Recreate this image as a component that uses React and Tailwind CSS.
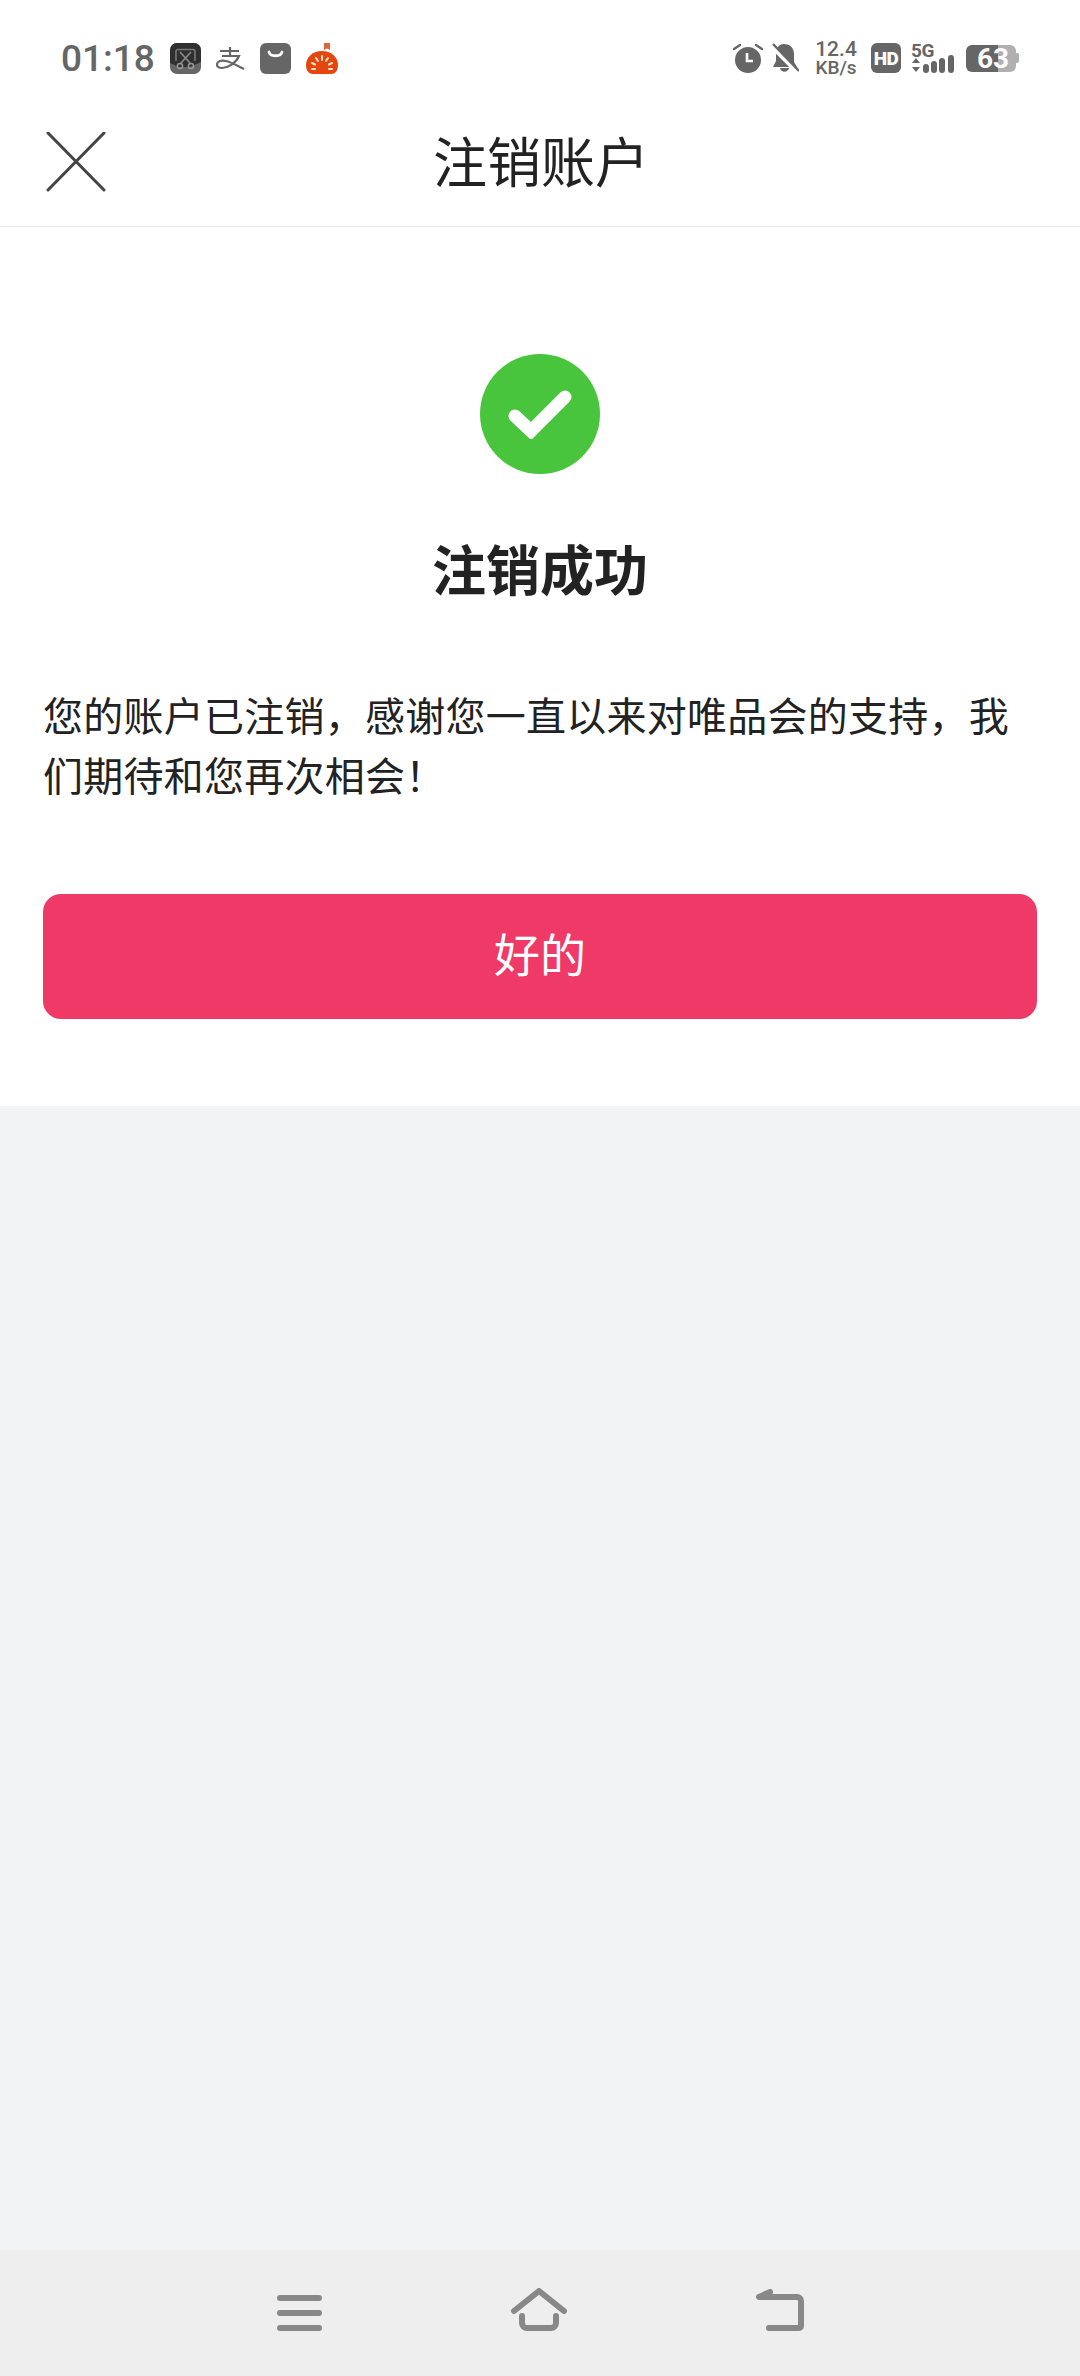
const FONT = "font-['Roboto','Noto_Sans_CJK_SC',sans-serif]";

const ScissorsApp = () => (
  <svg width="31" height="31" viewBox="0 0 31 31">
    <rect width="31" height="31" rx="7" fill="#666" />
    <path d="M0 7a7 7 0 0 1 7-7h17a7 7 0 0 1 7 7v12L20 24H9L0 20z" fill="#2f2f2f" />
    <path d="M6 18V8.500a2 2 0 0 1 2-2h15a2 2 0 0 1 2 2V18" fill="none" stroke="#777" strokeWidth="1.600" />
    <path d="M10 9l10 11M21 9L11 20" stroke="#888" strokeWidth="1.800" />
    <circle cx="10" cy="23" r="2.600" fill="none" stroke="#999" strokeWidth="1.500" />
    <circle cx="21" cy="23" r="2.600" fill="none" stroke="#999" strokeWidth="1.500" />
  </svg>
);

const AlipayIcon = () => (
  <svg width="29" height="24" viewBox="0 0 29 24" fill="none" stroke="#666" strokeWidth="2.200">
    <path d="M4 5h19M14 1v8M6 10h17C20 17 12 22 6 22c-3 0-5-1-5-3.500C1 15 6 14 10 15c6 1.500 12 5 18 8" />
  </svg>
);

const BagIcon = () => (
  <svg width="31" height="31" viewBox="0 0 31 31">
    <rect width="31" height="31" rx="6" fill="#666" />
    <path d="M9 9c1 5 12 5 13 0" fill="none" stroke="#fff" strokeWidth="2.800" strokeLinecap="round" />
  </svg>
);

const PumpkinIcon = () => (
  <svg width="32" height="31" viewBox="0 0 32 31">
    <path d="M18 0h6v7l-3-1.500L18 7z" fill="#d9683d" />
    <path d="M16 8c9 0 16 6 16 14 0 6-3 9-7 9H7c-4 0-7-3-7-9C0 14 7 8 16 8z" fill="#e5450f" />
    <path d="M16 13v4M10 15l2 3M22 15l-2 3M6 20l3 1.500M26 20l-3 1.500M6 26h3M23 26h3" stroke="#ffe4c8" strokeWidth="2" strokeLinecap="round" />
  </svg>
);

const AlarmIcon = () => (
  <svg width="30" height="30" viewBox="0 0 30 30">
    <circle cx="15" cy="17" r="13" fill="#666" />
    <path d="M14 10v8h6" fill="none" stroke="#fff" strokeWidth="2.600" />
    <path d="M1 6l6-4M29 6l-6-4" stroke="#666" strokeWidth="2.400" strokeLinecap="round" />
  </svg>
);

const BellOffIcon = () => (
  <svg width="28" height="30" viewBox="0 0 28 30">
    <path d="M13 1c6 0 10 4 10 10v8l3 5H2l3-6v-7C5 5 8 1 13 1zM9 25h9c-1 5-8 5-9 0z" fill="#666" />
    <path d="M0 3l26 26" stroke="#fff" strokeWidth="4" />
    <path d="M2 1l26 27" stroke="#666" strokeWidth="2.400" />
  </svg>
);

const HdIcon = () => (
  <div className="flex h-[30px] w-[30px] items-center justify-center rounded-[6px] bg-[#666] text-[19px] leading-none font-black tracking-[-0.5px] text-white">
    HD
  </div>
);

const SignalIcon = () => (
  <svg width="46" height="31" viewBox="0 0 46 31" className="block">
    <path d="M1 20l4-5 4 5zM1 24l4 5 4-5z" fill="#666" />
    <rect x="12" y="21" width="6" height="9" rx="3" fill="#666" />
    <rect x="20" y="18" width="6" height="12" rx="3" fill="#666" />
    <rect x="28" y="15" width="6" height="15" rx="3" fill="#666" />
    <rect x="37" y="12" width="6" height="18" rx="3" fill="#666" />
  </svg>
);

const Battery = () => (
  <div className="relative flex h-[27px] w-[54px]">
    <div className="h-full w-[32px] rounded-l-[6px] bg-[#666]" />
    <div className="h-full w-[18px] rounded-r-[6px] bg-[#b0b0b0]" />
    <div className="my-auto h-[10px] w-[3px] rounded-r-[2px] bg-[#b0b0b0]" />
    <span className="absolute top-0 left-[11px] text-[28px] leading-[27px] font-bold text-white">
      63
    </span>
  </div>
);

const StatusBar = () => (
  <div className="flex h-[100px] items-center justify-between pt-[16px] pr-[60px] pl-[61px] text-[#666]">
    <div className="flex items-center">
      <span className="w-[92px] text-[37px] leading-none font-medium">01:18</span>
      <div className="ml-[17px] flex items-center gap-[15px]">
        <ScissorsApp />
        <AlipayIcon />
        <BagIcon />
        <PumpkinIcon />
      </div>
    </div>
    <div className="flex items-center">
      <AlarmIcon />
      <div className="ml-[8px]">
        <BellOffIcon />
      </div>
      <div className="ml-[14px] flex w-[46px] flex-col items-center font-medium">
        <span className="text-[21px] leading-[19px]">12.4</span>
        <span className="text-[19px] leading-[17px]">KB/s</span>
      </div>
      <div className="ml-[12px]">
        <HdIcon />
      </div>
      <div className="relative ml-[10px] h-[31px] w-[46px]">
        <span className="absolute top-0 left-0 text-[19px] leading-[15px] font-bold tracking-[-0.5px]">5G</span>
        <SignalIcon />
      </div>
      <div className="ml-[9px]">
        <Battery />
      </div>
    </div>
  </div>
);

const Header = () => (
  <div className="relative flex h-[127px] items-center justify-center border-b border-[#e6e6e6] bg-white pt-[3px] pl-[2px]">
    <button className="absolute top-[32px] left-[46px]">
      <svg width="60" height="60" viewBox="0 0 60 60" className="block" fill="none" stroke="#444" strokeWidth="3" strokeLinecap="round">
        <path d="M2 1l56 57M58 1L2 58" />
      </svg>
    </button>
    <h1 className="text-[54px] leading-none font-normal text-[#222]">注销账户</h1>
  </div>
);

const NavBar = () => (
  <div className="flex h-[126px] items-start justify-center bg-[#eeeeee] pt-[38px]">
    <div className="ml-[1px] flex w-[527px] items-start justify-between">
      <svg width="45" height="36" viewBox="0 0 45 36" fill="none" stroke="#888" strokeWidth="6" strokeLinecap="round" className="mt-[7px]">
        <path d="M3 3h39M3 18h39M3 33h39" />
      </svg>
      <svg width="56" height="43" viewBox="0 0 56 43" fill="none" stroke="#888" strokeWidth="6" strokeLinecap="round" strokeLinejoin="round">
        <path d="M3 23L28 3l25 20M11 28v7a5 5 0 0 0 5 5h24a5 5 0 0 0 5-5v-7" />
      </svg>
      <svg width="48" height="42" viewBox="0 0 48 42" fill="none" stroke="#888" strokeWidth="6" strokeLinecap="round" strokeLinejoin="round" className="mt-[1px]">
        <path d="M14 3L3 8h38a4 4 0 0 1 4 4v25a2 2 0 0 1-2 2H13" />
      </svg>
    </div>
  </div>
);

export default function App() {
  return (
    <div className={`flex h-[2376px] flex-col bg-[#f2f3f5] ${FONT}`}>
      <div className="bg-white">
        <StatusBar />
        <Header />
      </div>
      <div className="flex flex-col bg-white px-[43px] pt-[127px] pb-[87px]">
        <div className="flex h-[120px] w-[120px] items-center justify-center self-center rounded-full bg-[#48c53c]">
          <svg width="64" height="50" viewBox="0 0 64 50" fill="none" stroke="#fff" strokeWidth="13" strokeLinecap="round" strokeLinejoin="miter">
            <path d="M7 27l16 15L57 8" />
          </svg>
        </div>
        <h2 className="mt-[68px] text-center text-[54px] leading-[62px] font-bold text-[#222]">注销成功</h2>
        <p className="mt-[84px] text-[40px] leading-[60px] tracking-[0.25px] text-[#222]">
          您的账户已注销，感谢您一直以来对唯品会的支持，我们期待和您再次相会！
        </p>
        <button className="mt-[86px] h-[125px] w-full rounded-[18px] bg-[#ef3a67] text-[46px] text-white">好的</button>
      </div>
      <div className="flex-1" />
      <NavBar />
    </div>
  );
}
